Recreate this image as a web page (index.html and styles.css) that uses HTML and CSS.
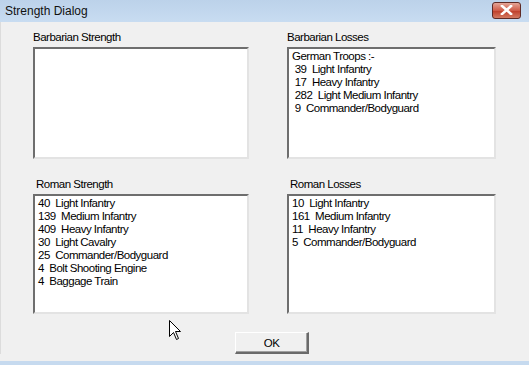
FILE: index.html
```html
<!DOCTYPE html>
<html lang="en">
<head>
    <meta charset="UTF-8">
    <title>Strength Dialog</title>
    <link rel="stylesheet" href="styles.css">
</head>
<body>
    <div class="window">
        <div class="titlebar">
            <span class="title">Strength Dialog</span>
            <span class="close">
                <svg width="13" height="10" viewBox="0 0 13 10">
                    <path d="M2 1 L11 9 M11 1 L2 9" stroke="#fff" stroke-width="2.6" stroke-linecap="square"/>
                </svg>
            </span>
        </div>
        <div class="content">
            <div class="panels">
                <div class="panel">
                    <div class="label">Barbarian Strength</div>
                    <div class="listbox upper"></div>
                </div>
                <div class="panel">
                    <div class="label">Barbarian Losses</div>
                    <div class="listbox upper">German Troops :-
 39  Light Infantry
 17  Heavy Infantry
 282  Light Medium Infantry
 9  Commander/Bodyguard</div>
                </div>
                <div class="panel lower">
                    <div class="label">Roman Strength</div>
                    <div class="listbox">40  Light Infantry
139  Medium Infantry
409  Heavy Infantry
30  Light Cavalry
25  Commander/Bodyguard
4  Bolt Shooting Engine
4  Baggage Train</div>
                </div>
                <div class="panel lower">
                    <div class="label">Roman Losses</div>
                    <div class="listbox">10  Light Infantry
161  Medium Infantry
11  Heavy Infantry
5  Commander/Bodyguard</div>
                </div>
            </div>
            <div class="actions">
                <button type="button" class="ok">OK</button>
            </div>
        </div>
        <!-- mouse pointer left in the capture -->
        <svg class="cursor" width="13" height="21" viewBox="0 0 13 21">
            <path d="M0.5 0.5 L0.5 16.5 L4.5 12.5 L7.5 19.5 L9.5 18.5 L6.5 11.5 L11.5 11.5 Z" fill="#fff" stroke="#000" stroke-width="1"/>
        </svg>
    </div>
</body>
</html>
```

FILE: styles.css
```css
body {
    margin: 0;
    font-family: "Liberation Sans", Arial, sans-serif;
    font-size: 11.5px;
    letter-spacing: -0.5px;
    color: #000;
}

.window {
    position: relative;
    width: 529px;
    height: 365px;
    background-color: #f0f0f0;
    border-bottom: 4px solid #c6daef;
    box-sizing: border-box;
    overflow: hidden;
}

.titlebar {
    height: 22px;
    display: flex;
    align-items: center;
    justify-content: space-between;
    padding: 0 8px 0 5px;
    background: linear-gradient(#bcd2ea, #c8dcf1);
}

.title {
    font-size: 12px;
    letter-spacing: 0;
    color: #111;
}

.close {
    width: 27px;
    height: 15px;
    display: flex;
    align-items: center;
    justify-content: center;
    border: 1px solid #5e2a25;
    border-radius: 3px;
    background: linear-gradient(#e4a597, #cf5c48 50%, #c0412c 55%, #d37a62);
    margin-top: -2px;
}

.content {
    padding: 8px 0 0 32px;
    border-left: 1px solid #dcdcdc;
}

.panels {
    display: grid;
    grid-template-columns: 216px 209px;
    grid-template-rows: 129px 137px;
    column-gap: 38px;
    row-gap: 18px;
}

.panel {
    display: flex;
    flex-direction: column;
}

.label {
    line-height: 14px;
    height: 14px;
    margin-bottom: 3px;
}

.lower .label {
    padding-left: 3px;
}

.listbox {
    flex: 1;
    background-color: #fff;
    border-style: solid;
    border-width: 2px;
    border-color: #6e6e6e #e3e3e3 #e3e3e3 #6e6e6e;
    padding: 1px 3px;
    white-space: pre;
    line-height: 13px;
}

.actions {
    margin-top: 18px;
    padding-left: 202px;
}

.ok {
    width: 74px;
    height: 22px;
    margin: 0;
    padding: 0;
    background-color: #f0f0f0;
    border-style: solid;
    border-width: 1px 2px 2px 1px;
    border-color: #fff #6a6a6a #6a6a6a #fff;
    box-shadow: inset -1px -1px 0 #a0a0a0;
    font-family: inherit;
    font-size: 11.5px;
    letter-spacing: inherit;
    color: #000;
}

.cursor {
    position: absolute;
    left: 169px;
    top: 320px;
}
```
